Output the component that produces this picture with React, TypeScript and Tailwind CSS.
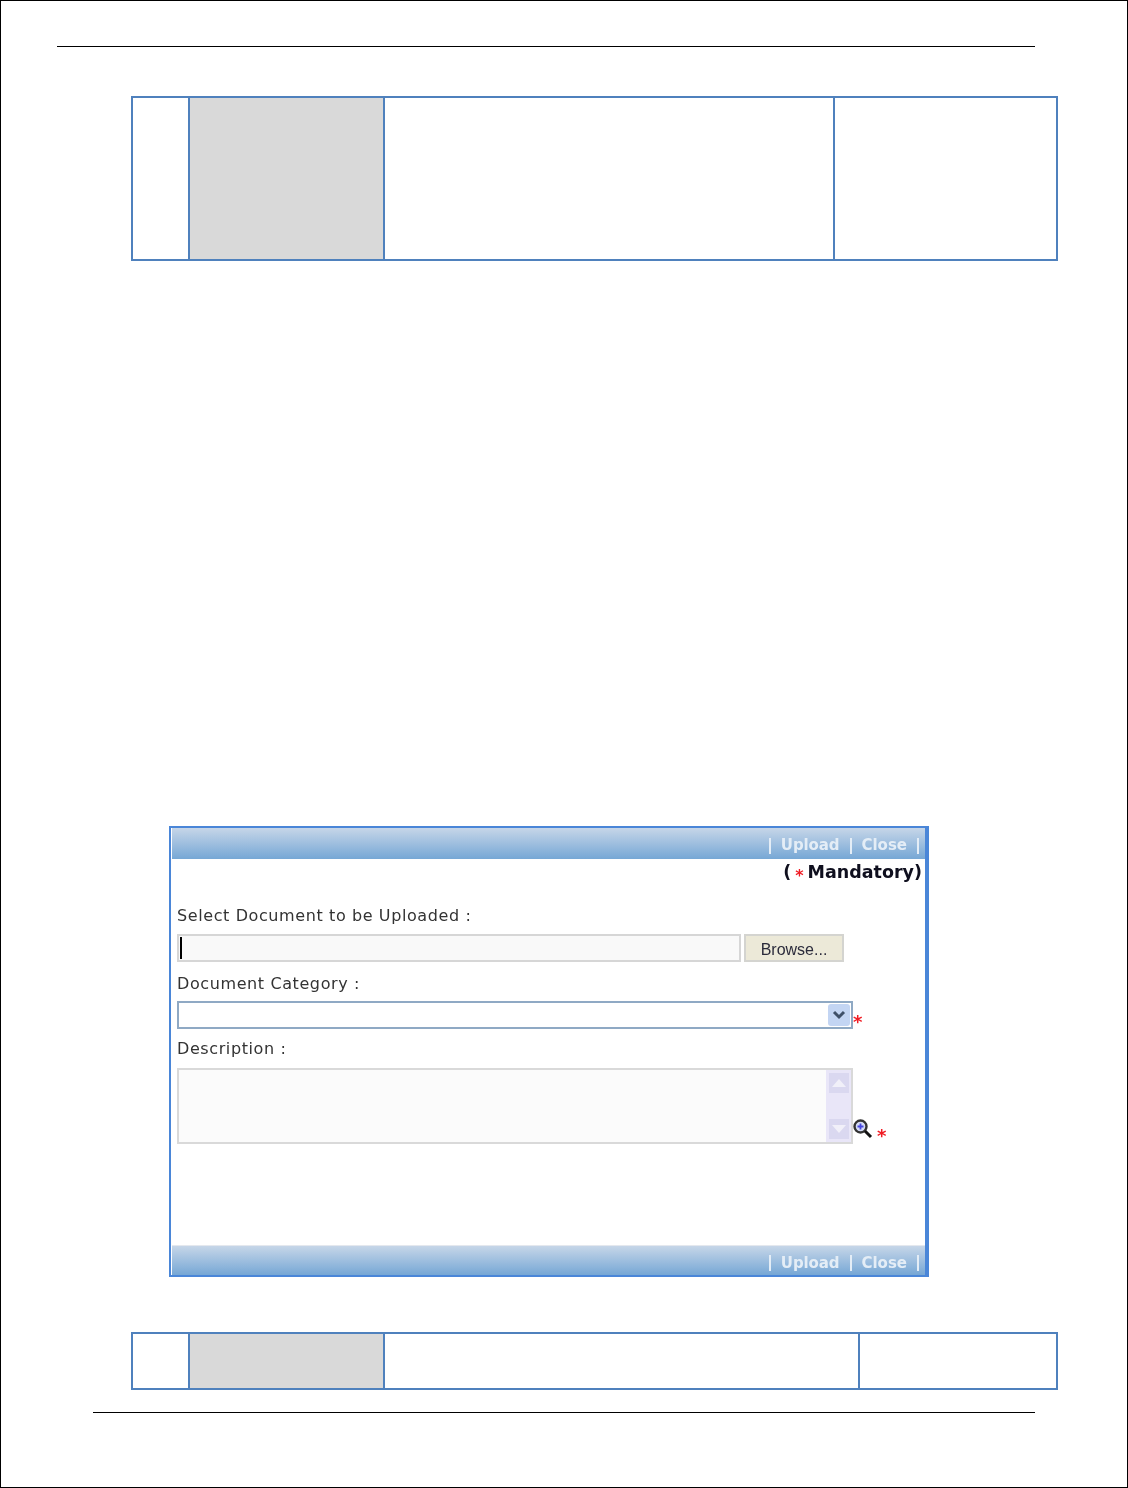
const labelClass = 'font-["DejaVu_Sans",sans-serif] text-[16px] leading-[20px] tracking-[0.6px] text-[#333333]';

function Toolbar({ className }: { className: string }) {
  return (
    <div className={`flex items-center justify-end pr-[6px] bg-gradient-to-b from-[#c6d6e8] to-[#76a7d5] font-["DejaVu_Sans",sans-serif] text-[15px] font-bold text-[#e4edf6] ${className}`}>
      <span className="w-[2px] h-[16px] bg-[#e4edf6] mr-[10px]" />
      <span className="tracking-[-0.1px]">Upload</span>
      <span className="w-[2px] h-[16px] bg-[#e4edf6] ml-[11px] mr-[9px]" />
      <span>Close</span>
      <span className="w-[2px] h-[16px] bg-[#e4edf6] ml-[10px]" />
    </div>
  );
}

function Star({ className }: { className: string }) {
  return <span className={`font-["DejaVu_Sans",sans-serif] font-bold text-[#f01c24] ${className}`}>*</span>;
}

function ScrollArrow({ up }: { up: boolean }) {
  return (
    <div className="w-[20px] h-[20px] bg-[#dad8f0] flex items-center justify-center">
      <svg width="14" height="8" viewBox="0 0 14 8">
        <path d={up ? 'M7 0 L14 8 L0 8 Z' : 'M0 0 L14 0 L7 8 Z'} fill="#f1f0f9" />
      </svg>
    </div>
  );
}

function TableStrip({ height, third }: { height: string; third: string }) {
  return (
    <div className={`ml-[130px] w-[927px] border-2 border-[#4f81bd] flex ${height}`}>
      <div className="w-[57px] border-r-2 border-[#4f81bd]" />
      <div className="w-[195px] bg-[#d9d9d9] border-r-2 border-[#4f81bd]" />
      <div className={`${third} border-r-2 border-[#4f81bd]`} />
      <div className="flex-1" />
    </div>
  );
}

export default function App() {
  return (
    <div className="w-[1128px] h-[1488px] bg-white border border-black pt-[45px] overflow-hidden">
      <div className="ml-[56px] w-[978px] h-px bg-black" />
      <div className="mt-[49px]">
        <TableStrip height="h-[165px]" third="w-[450px]" />
      </div>

      <div className="mt-[565px] ml-[168px] w-[760px] h-[451px] border-2 border-r-4 border-[#4a86d8] flex flex-col bg-white pl-[1px] [filter:blur(0.5px)]">
        <Toolbar className="h-[31px] pt-[4px]" />
        <div className="flex-1 flex flex-col px-[5px]">
          <div className='h-[25px] pt-[2px] -mr-[2px] flex items-center justify-end font-["DejaVu_Sans",sans-serif] text-[17.5px] font-bold text-[#0f0f1e]'>
            (<Star className="text-[16px] mx-[4px] mt-[6px]" />Mandatory)
          </div>
          <div className={`mt-[22px] ${labelClass}`}>Select Document to be Uploaded :</div>
          <div className="mt-[8px] flex gap-[3px]">
            <div className="w-[564px] h-[28px] bg-[#f9f9f9] border-2 border-[#d6d6d6] flex items-center pl-[1px]">
              <span className="w-[2px] h-[22px] bg-black" />
            </div>
            <div className='w-[100px] h-[28px] pt-[4px] bg-[#ece9d8] border-2 border-[#d4d4d0] flex items-center justify-center font-["Liberation_Sans",sans-serif] text-[16px] text-[#2b2b3b]'>
              Browse...
            </div>
          </div>
          <div className={`mt-[12px] ${labelClass}`}>Document Category :</div>
          <div className="mt-[7px] h-[28px] flex items-start">
            <div className="w-[676px] h-[28px] shrink-0 bg-white border-2 border-[#8fa9c4] flex items-center justify-end pr-[1px]">
              <div className="w-[22px] h-[22px] bg-[#c3d5f3] rounded-[3px] flex items-center justify-center">
                <svg width="14" height="10" viewBox="0 0 14 10">
                  <path d="M2 2 L7 7 L12 2" fill="none" stroke="#3f5068" strokeWidth="3" />
                </svg>
              </div>
            </div>
            <Star className="mt-[11px] text-[18px] leading-[20px] h-[17px]" />
          </div>
          <div className={`mt-[10px] ${labelClass}`}>Description :</div>
          <div className="mt-[9px] flex items-end">
            <div className="w-[676px] h-[76px] bg-[#fbfbfb] border-2 border-[#d9d9d9] flex justify-end">
              <div className="w-[25px] bg-[#e9e6f8] flex flex-col justify-between items-center py-[3px]">
                <ScrollArrow up />
                <ScrollArrow up={false} />
              </div>
            </div>
            <svg className="mb-[5px]" width="20" height="20" viewBox="0 0 20 20">
              <circle cx="7.5" cy="7.5" r="6" fill="#d5dcf5" stroke="#333" strokeWidth="2.4" />
              <path d="M4.5 7.5 H10.5 M7.5 4.5 V10.5" stroke="#4646e0" strokeWidth="1.8" />
              <path d="M12 12 L18 18" stroke="#111" strokeWidth="3" />
            </svg>
            <Star className="ml-[4px] -mb-[2px] text-[18px] leading-[20px]" />
          </div>
        </div>
        <div className="border-t border-[#e4e8ee]">
          <Toolbar className="h-[29px] pt-[5px]" />
        </div>
      </div>

      <div className="mt-[55px]">
        <TableStrip height="h-[58px]" third="w-[475px]" />
      </div>
      <div className="mt-[22px] ml-[92px] w-[942px] h-px bg-black" />
    </div>
  );
}
